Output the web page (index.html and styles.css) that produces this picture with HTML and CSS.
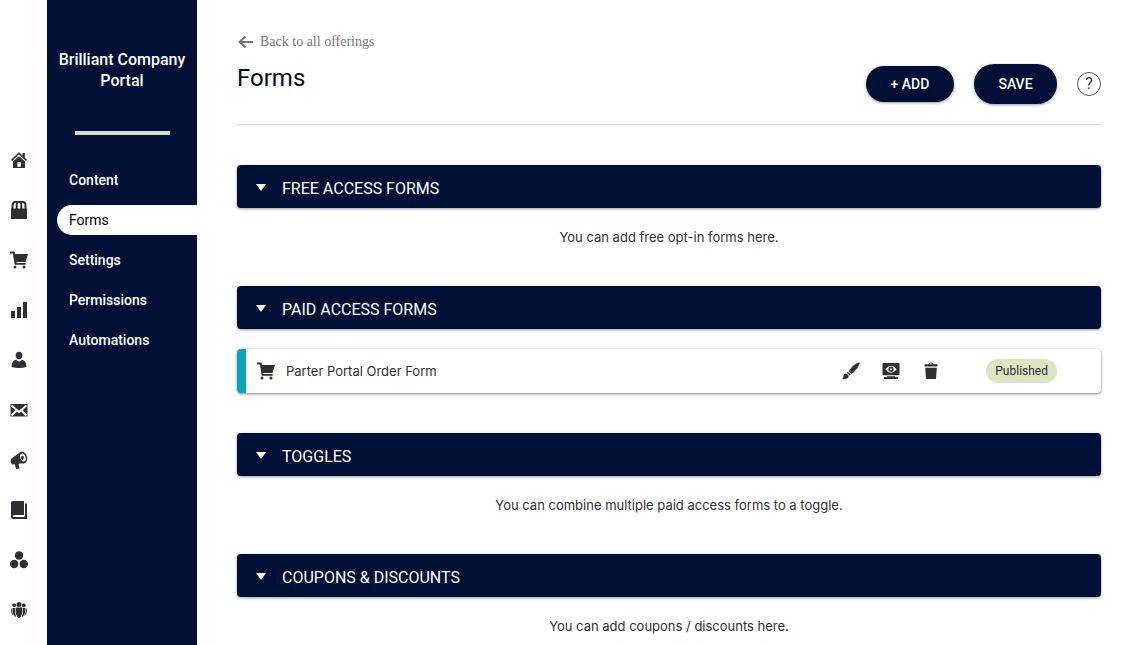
FILE: index.html
```html
<!DOCTYPE html>
<html lang="en">
<head>
    <meta charset="UTF-8">
    <meta name="viewport" content="width=device-width, initial-scale=1">
    <title>Forms - Brilliant Company Portal</title>
    <link rel="stylesheet" href="styles.css">
</head>
<body>
    <!-- Shared icons -->
    <svg class="icon-defs" aria-hidden="true">
        <symbol id="icon-cart" viewBox="0 0 18 18">
            <path d="M0 .5h4.500l.6 2.500H18l-2.500 8H6.200l.3 1h9v1.700H4.700L2.900 2.600H0z"/>
            <circle cx="5" cy="16" r="1.500"/>
            <circle cx="14" cy="16" r="1.500"/>
        </symbol>
    </svg>

    <div class="app">
        <nav class="rail" aria-label="Main">
            <a href="#" aria-label="Home">
                <svg viewBox="0 0 18 18"><path d="M9 1.200l3.500 3.300V2h2.300v4.700L17 8.800l-1.100 1.100L9 3.600l-6.900 6.300L1 8.800z"/><path fill-rule="evenodd" d="M9 5.200l6 5.400V17H3v-6.400zM7.400 11v4.800h3.400V11z"/></svg>
            </a>
            <a href="#" aria-label="Offerings">
                <svg viewBox="0 0 18 18"><path d="M1 7.500h16V18H1z"/><path class="line-thin" d="M2.500 8.500V5Q2.500.7 6 .7h6q3.500 0 3.500 4.300v3.500M6.700 8.500V5Q6.700.7 9 .7T11.300 5v3.500"/></svg>
            </a>
            <a href="#" aria-label="Orders">
                <svg><use href="#icon-cart"/></svg>
            </a>
            <a href="#" aria-label="Reports">
                <svg viewBox="0 0 18 18"><path d="M1 10h4v7H1zM7 6h4v11H7zM13 1h4v16h-4z"/></svg>
            </a>
            <a href="#" aria-label="Account">
                <svg viewBox="0 0 18 18"><ellipse cx="9" cy="4.500" rx="3.300" ry="3.800"/><path d="M6 8.700l3 2.100 3-2.100q4.500.8 4.500 7.300-7.500 2.200-15 0 0-6.500 4.500-7.300z"/></svg>
            </a>
            <a href="#" aria-label="Mail">
                <svg viewBox="0 0 18 18"><path d="M.5 3h17v12.500H.5z"/><path class="line-light" d="M1.500 4.500L9 11l7.500-6.500M1.500 14.500l5-5M16.500 14.500l-5-5"/></svg>
            </a>
            <a href="#" aria-label="Marketing">
                <svg viewBox="0 0 18 18"><path d="M1.200 7.700L10.500 1l4.300 11.300-5.600.2-.7 1 1 4-3.400.5-1.300-4.800-2.600.2Q-.6 10.500 1.200 7.700z"/><ellipse cx="12.700" cy="6.500" rx="4.400" ry="5.900" transform="rotate(-18 12.700 6.500)"/><ellipse class="light" cx="13" cy="6.500" rx="2.700" ry="4" transform="rotate(-18 13 6.500)"/><ellipse cx="12.500" cy="6.700" rx="1.400" ry="2"/></svg>
            </a>
            <a href="#" aria-label="Courses">
                <svg viewBox="0 0 18 18"><path d="M3 0h11v14H3.500v1H15V2.500h2V18H3q-2 0-2-2V2q0-2 2-2z"/><path class="light" d="M3 14.700h11.500v1.200H3zM14 2h1v13h-1z"/></svg>
            </a>
            <a href="#" aria-label="Integrations">
                <svg viewBox="0 0 18 18"><circle cx="9" cy="4.500" r="4.200"/><circle cx="4.200" cy="13" r="4.200"/><circle cx="13.800" cy="13" r="4.200"/></svg>
            </a>
            <a href="#" aria-label="Community">
                <svg viewBox="0 0 18 18"><circle cx="9" cy="3.500" r="2.500"/><circle cx="4.200" cy="4.300" r="1.900"/><circle cx="13.800" cy="4.300" r="1.900"/><path d="M6.300 6.500h5.400q1.500 5.500-.8 8.800Q9 19 7.100 15.300 4.800 12 6.300 6.500zM3 7h2.500q-1.200 5 .9 9.300Q2 14.500 3 7zM15 7h-2.500q1.200 5-.9 9.300Q16 14.500 15 7zM1.500 7.200H2.500q-.8 4 1 7.500Q0 12 1.500 7.200zM16.500 7.200H15.500q.8 4-1 7.500Q18 12 16.500 7.200z"/></svg>
            </a>
        </nav>

        <aside class="sidebar">
            <div class="brand">Brilliant Company Portal</div>
            <nav class="menu" aria-label="Offering">
                <a href="#">Content</a>
                <a href="#" class="active" aria-current="page">Forms</a>
                <a href="#">Settings</a>
                <a href="#">Permissions</a>
                <a href="#">Automations</a>
            </nav>
        </aside>

        <main class="content">
            <header class="page-header">
                <div class="page-title">
                    <a href="#" class="back-link">
                        <svg viewBox="0 0 16 14"><path d="M8 1.500L2 7l6 5.500M2 7h13.500"/></svg>
                        Back to all offerings
                    </a>
                    <h1>Forms</h1>
                </div>
                <div class="actions">
                    <button type="button" class="btn btn-add">+ ADD</button>
                    <button type="button" class="btn btn-save">SAVE</button>
                    <button type="button" class="help" aria-label="Help">?</button>
                </div>
            </header>

            <section class="group">
                <h2><button type="button" class="group-toggle" aria-expanded="true">FREE ACCESS FORMS</button></h2>
                <p class="empty">You can add free opt-in forms here.</p>
            </section>

            <section class="group">
                <h2><button type="button" class="group-toggle" aria-expanded="true">PAID ACCESS FORMS</button></h2>
                <div class="form-card">
                    <svg class="icon"><use href="#icon-cart"/></svg>
                    <span class="form-name">Parter Portal Order Form</span>
                    <div class="form-actions">
                        <button type="button" aria-label="Edit design">
                            <svg class="icon" viewBox="0 0 18 18"><path d="M17.600.6q.5.700-1 3.400-1.800 3.200-4.900 6.200l-2 1.600-3-2.900 1.600-2.100Q11.200 3.500 14.200 1.500 17-.1 17.600.600zM5.800 9.800l2.900 2.800-1.200.8-2.500-2.500zM4.400 11.500l2.300 2.300q-.2 2.800-3 3.200Q1.500 17.400 0 16.800q1.400-.6 1.400-2.300 0-2.800 3-3z"/></svg>
                        </button>
                        <button type="button" aria-label="Preview">
                            <svg class="icon" viewBox="0 0 18 18"><path d="M1.500 1h15q1 0 1 1v10.300q0 1-1 1h-15q-1 0-1-1V2q0-1 1-1zM5 14.300h8v.8h3V17H2v-1.900h3z"/><path class="light" d="M3.300 7.200Q6 3.700 9 3.700t5.700 3.500Q12 10.700 9 10.700T3.300 7.200z"/><circle cx="9" cy="7.200" r="2.600"/><circle class="light" cx="9" cy="7.200" r="1"/></svg>
                        </button>
                        <button type="button" aria-label="Delete">
                            <svg class="icon" viewBox="0 0 18 18"><path fill-rule="evenodd" d="M6.500 2.200Q6.500.7 8 .7h2q1.500 0 1.500 1.500h4v2.300h-13V2.200zm1.200 0h2.600q0-.7-.7-.7H8.400q-.7 0-.7.700zM3.200 5.700h11.600L14 17H4z"/></svg>
                        </button>
                    </div>
                    <span class="status">Published</span>
                </div>
            </section>

            <section class="group">
                <h2><button type="button" class="group-toggle" aria-expanded="true">TOGGLES</button></h2>
                <p class="empty">You can combine multiple paid access forms to a toggle.</p>
            </section>

            <section class="group">
                <h2><button type="button" class="group-toggle" aria-expanded="true">COUPONS &amp; DISCOUNTS</button></h2>
                <p class="empty">You can add coupons / discounts here.</p>
            </section>
        </main>
    </div>
</body>
</html>
```
FILE: styles.css
```css
* {
    margin: 0;
    padding: 0;
    box-sizing: border-box;
}

body {
    background: #fff;
    color: #2f3033;
    font-family: Inter, sans-serif;
    font-size: 13px;
}

a {
    color: inherit;
    text-decoration: none;
}

button {
    border: none;
    background: none;
    color: inherit;
    font-family: inherit;
    cursor: pointer;
}

.icon-defs {
    display: none;
}

.app {
    display: flex;
    min-height: 100vh;
}

/* Icon rail */
.rail {
    flex: 0 0 47px;
    display: flex;
    flex-direction: column;
    gap: 32px;
    padding: 151px 10px 16px;
}

.rail a {
    display: block;
    height: 18px;
}

.rail svg,
.icon {
    display: block;
    width: 18px;
    height: 18px;
    fill: #2f3033;
}

.icon .light,
.rail .light {
    fill: #fff;
}

.line-thin {
    fill: none;
    stroke: #2f3033;
    stroke-width: 2;
}

.line-light {
    fill: none;
    stroke: #fff;
    stroke-width: 2;
}

/* Sidebar */
.sidebar {
    flex: 0 0 150px;
    background: #000f36;
    color: #fff;
    font-family: Roboto, sans-serif;
    font-weight: 500;
}

.brand {
    padding: 49px 10px 40px;
    font-size: 16px;
    line-height: 21px;
    text-align: center;
}

.brand::after {
    content: '';
    display: block;
    width: 95px;
    height: 4px;
    margin: 40px auto 0;
    background: #d5e2c8;
}

.menu {
    display: flex;
    flex-direction: column;
    gap: 10px;
    padding-left: 10px;
    margin-top: -10px;
}

.menu a {
    padding-left: 12px;
    border-radius: 15px 0 0 15px;
    font-size: 14px;
    line-height: 30px;
}

.menu .active {
    background: #fff;
    color: #000;
    font-weight: 400;
}

/* Page */
.content {
    flex: 1;
    min-width: 0;
    padding: 32px 32px 0 40px;
}

.page-header {
    display: flex;
    justify-content: space-between;
    align-items: flex-end;
    padding-bottom: 20px;
    border-bottom: 1px solid #ddd;
}

.page-title {
    align-self: flex-start;
}

.back-link {
    display: flex;
    align-items: center;
    gap: 6px;
    color: #777;
    font-family: "Liberation Serif", serif;
    font-size: 14px;
    line-height: 20px;
}

.back-link svg {
    width: 17px;
    height: 14px;
    fill: none;
    stroke: #777;
    stroke-width: 2;
}

h1 {
    margin-top: 10px;
    color: #000820;
    font-family: Roboto, sans-serif;
    font-size: 24px;
    font-weight: 400;
    line-height: 32px;
}

.actions {
    display: flex;
    align-items: center;
    gap: 20px;
    margin-top: 32px;
}

.btn {
    padding: 0 24px;
    border-radius: 20px;
    background: #000f36;
    color: #fff;
    font-family: Roboto, sans-serif;
    font-size: 14px;
    font-weight: 500;
    box-shadow: 0 1px 3px rgba(0, 0, 0, 0.4);
}

.btn-add {
    min-width: 88px;
    height: 36px;
}

.btn-save {
    min-width: 83px;
    height: 40px;
}

.help {
    width: 24px;
    height: 24px;
    border: 1px solid #555;
    border-radius: 50%;
    font-family: Roboto, sans-serif;
    font-size: 16px;
    line-height: 22px;
}

/* Form groups */
.group {
    margin-top: 40px;
}

.group-toggle {
    display: flex;
    align-items: center;
    gap: 16px;
    width: 100%;
    height: 43px;
    padding: 3px 20px 0;
    border-radius: 4px;
    background: #000f36;
    color: #fff;
    font-family: Roboto, sans-serif;
    font-size: 16px;
    font-weight: 400;
    text-align: left;
    box-shadow: 0 1px 3px rgba(0, 0, 0, 0.4);
}

.group-toggle::before {
    content: '';
    border: solid transparent;
    border-width: 7px 5px 0;
    border-top-color: #fff;
    margin-bottom: 2px;
    margin-left: -1px;
}

.empty {
    margin-top: 20px;
    line-height: 18px;
    text-align: center;
}

.form-card {
    display: flex;
    align-items: center;
    height: 44px;
    margin-top: 20px;
    padding: 0 44px 0 11px;
    border-left: 9px solid #00a9b5;
    border-radius: 4px;
    box-shadow: 0 1px 3px rgba(0, 0, 0, 0.5);
}

.form-name {
    flex: 1;
    margin-left: 11px;
}

.form-actions {
    display: flex;
    gap: 22px;
    margin-right: 46px;
}

.status {
    padding: 0 9px;
    border-radius: 12px;
    background: #dbe5c1;
    font-family: Roboto, sans-serif;
    font-size: 12px;
    line-height: 24px;
}
```
